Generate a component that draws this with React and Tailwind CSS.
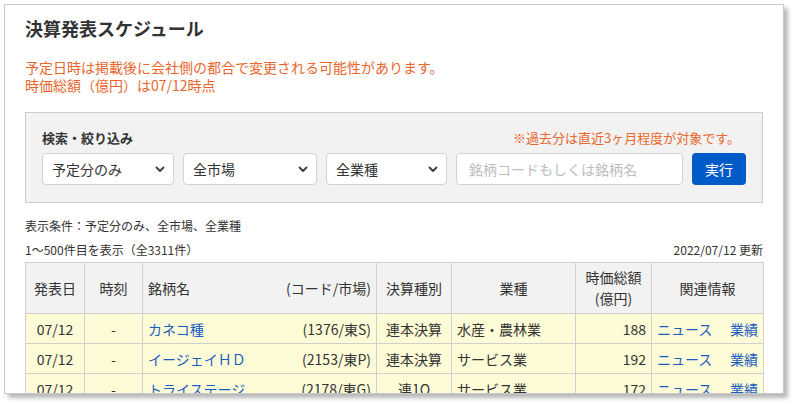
import React from "react";

const rows = [
    { date: "07/12", time: "-", name: "カネコ種", code: "(1376/東S)", kind: "連本決算", sector: "水産・農林業", cap: "188" },
    { date: "07/12", time: "-", name: "イージェイＨＤ", code: "(2153/東P)", kind: "連本決算", sector: "サービス業", cap: "192" },
    { date: "07/12", time: "-", name: "トライステージ", code: "(2178/東G)", kind: "連1Q", sector: "サービス業", cap: "172" },
];

function Chevron() {
    return (
        <svg width="10" height="7" viewBox="0 0 10 7" className="shrink-0">
            <path d="M1.5 1.5 L5 5 L8.5 1.5" fill="none" stroke="#444" strokeWidth="2" strokeLinecap="round" strokeLinejoin="round" />
        </svg>
    );
}

function FakeSelect({ label, width }) {
    return (
        <div className={`${width} h-[32px] bg-white border border-[#cfd3d8] rounded-[4px] flex items-center justify-between pl-[9px] pr-[8px] text-[14px] text-[#333]`}>
            <span>{label}</span>
            <Chevron />
        </div>
    );
}

function App() {
    const cell = "border border-[#d0d0d0] h-[30px] px-[5px] text-[14px] leading-[20px]";
    const head = "border border-[#d0d0d0] bg-[#f2f2f2] px-[5px] text-[14px] font-normal leading-[21px] text-[#333]";

    return (
        <div className="w-[796px] h-[404px] bg-white overflow-hidden" style={{ fontFamily: '"Noto Sans CJK JP", "Noto Sans", sans-serif' }}>
            <div className="ml-[4px] mt-[4px] w-[780px] h-[390px] border border-[#c8c8c8] bg-white overflow-hidden shadow-[4px_4px_4px_rgba(0,0,0,0.28)] pl-[20px] pr-[20px] pt-[10px] text-[#333]">
                {/* タイトル */}
                <h1 className="text-[18px] font-bold leading-[27px] text-[#333]">決算発表スケジュール</h1>

                {/* 注意書き */}
                <div className="mt-[16px] text-[14px] leading-[18px] text-[#e8662c]">
                    <p>予定日時は掲載後に会社側の都合で変更される可能性があります。</p>
                    <p>時価総額（億円）は07/12時点</p>
                </div>

                {/* 検索・絞り込み */}
                <div className="mt-[18px] w-[738px] h-[91px] bg-[#f2f2f2] border border-[#cccccc] pl-[16px] pr-[15px] pt-[16px]">
                    <div className="flex justify-between items-center h-[18px] pr-[7px]">
                        <span className="text-[13px] font-bold text-[#333]">検索・絞り込み</span>
                        <span className="text-[13px] text-[#e8662c]">※過去分は直近3ヶ月程度が対象です。</span>
                    </div>
                    <div className="mt-[6px] flex gap-[9px]">
                        <FakeSelect label="予定分のみ" width="w-[132px]" />
                        <FakeSelect label="全市場" width="w-[134px]" />
                        <FakeSelect label="全業種" width="w-[121px]" />
                        <div className="w-[227px] h-[32px] bg-white border border-[#cfd3d8] rounded-[4px] flex items-center pl-[12px] text-[14px] text-[#bdbdbd]">
                            銘柄コードもしくは銘柄名
                        </div>
                        <button className="w-[54px] h-[32px] bg-[#005bc8] rounded-[4px] text-white text-[14px]">実行</button>
                    </div>
                </div>

                {/* 表示条件 */}
                <p className="mt-[14px] text-[12px] leading-[18px] text-[#333]">表示条件：予定分のみ、全市場、全業種</p>
                <div className="mt-[6px] w-[738px] flex justify-between text-[12px] leading-[18px] text-[#333]">
                    <span>1～500件目を表示（全3311件）</span>
                    <span>2022/07/12 更新</span>
                </div>

                {/* テーブル */}
                <table className="mt-[3px] w-[738px] table-fixed border-collapse">
                    <colgroup>
                        <col className="w-[59px]" />
                        <col className="w-[58px]" />
                        <col className="w-[234px]" />
                        <col className="w-[75px]" />
                        <col className="w-[124px]" />
                        <col className="w-[76px]" />
                        <col className="w-[112px]" />
                    </colgroup>
                    <thead>
                        <tr className="h-[51px]">
                            <th className={`${head} text-center`}>発表日</th>
                            <th className={`${head} text-center`}>時刻</th>
                            <th className={head}>
                                <div className="flex justify-between">
                                    <span>銘柄名</span>
                                    <span>(コード/市場)</span>
                                </div>
                            </th>
                            <th className={`${head} text-center`}>決算種別</th>
                            <th className={`${head} text-center`}>業種</th>
                            <th className={`${head} text-center`}>
                                時価総額
                                <br />
                                (億円)
                            </th>
                            <th className={`${head} text-center`}>関連情報</th>
                        </tr>
                    </thead>
                    <tbody>
                        {rows.map((r, idx) => (
                            <tr key={idx} className="bg-[#fefcd7]">
                                <td className={`${cell} text-center`}>{r.date}</td>
                                <td className={`${cell} text-center`}>{r.time}</td>
                                <td className={cell}>
                                    <div className="flex justify-between">
                                        <a className="text-[#1a5cc0]">{r.name}</a>
                                        <span>{r.code}</span>
                                    </div>
                                </td>
                                <td className={`${cell} text-center`}>{r.kind}</td>
                                <td className={cell}>{r.sector}</td>
                                <td className={`${cell} text-right`}>{r.cap}</td>
                                <td className={cell}>
                                    <div className="flex justify-between text-[#1a5cc0]">
                                        <a>ニュース</a>
                                        <a>業績</a>
                                    </div>
                                </td>
                            </tr>
                        ))}
                    </tbody>
                </table>
            </div>
        </div>
    );
}

export default App;
